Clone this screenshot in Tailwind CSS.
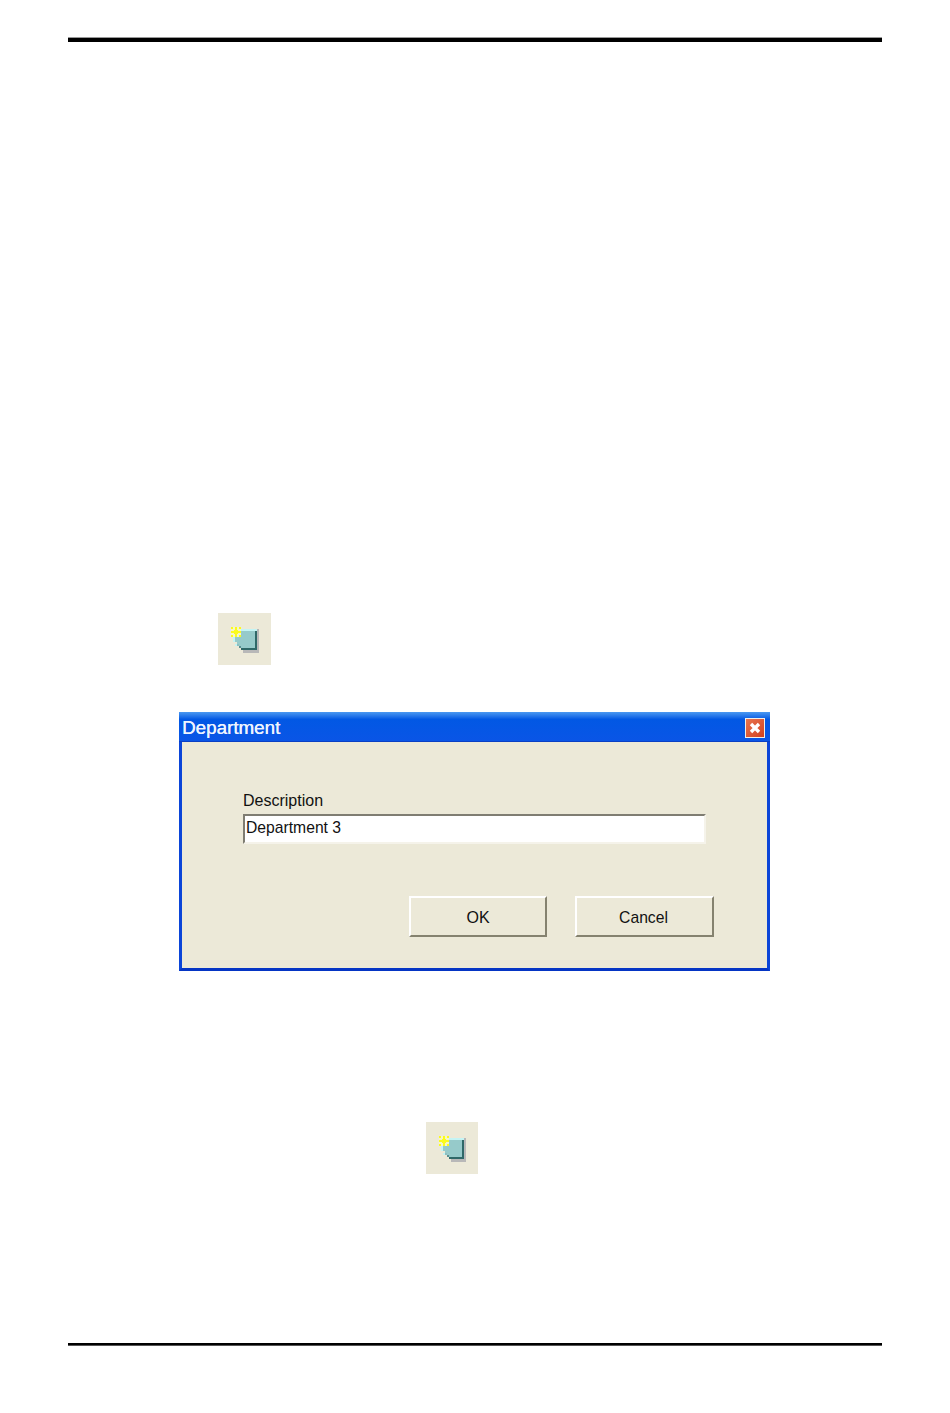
<!DOCTYPE html>
<html lang="en">
<head>
<meta charset="utf-8">
<title>Department</title>
<script src="https://cdn.jsdelivr.net/npm/@tailwindcss/browser@4"></script>
</head>
<body class="bg-white">
<main class="w-[950px] h-[1413px] px-[68px] pt-[37px] pb-[67px] flex flex-col font-['Liberation_Sans',sans-serif] overflow-hidden">
  <div class="h-[5px] shrink-0 bg-black border-t border-[#999999]"></div>

  <div class="ml-[150px] mt-[571px] w-[53px] h-[52px] shrink-0 bg-[#ece9d8] flex">
    <svg width="53" height="52" viewBox="0 0 53 52" shape-rendering="crispEdges" aria-hidden="true">
      <path d="M39 16H41V40H25V37H39Z" fill="#b8b8b8"/>
      <path d="M23 16H39V18H23ZM15 24H17V31H19V33H17V29H15Z" fill="#c4f4f4"/>
      <path d="M17 18H37V35H23V33H21V31H19V29H17Z" fill="#96caca"/>
      <path d="M37 18H39V37H23V35H37Z" fill="#2f6868"/>
      <path d="M19 31H21V33H19Z" fill="#8fbdbd"/>
      <path d="M21 33H23V35H21Z" fill="#5a9090"/>
      <path d="M13 14H23V24H13Z" fill="#f6f6c4"/>
      <path d="M16 17H20V21H16ZM17 14H19V17H17ZM17 21H19V24H17ZM13 18H16V20H13ZM20 18H23V20H20ZM13 14H15V16H13ZM21 14H23V16H21ZM13 22H15V24H13ZM21 22H23V24H21Z" fill="#fbfb1c"/>
    </svg>
  </div>

  <section class="ml-[111px] mt-[47px] w-[591px] h-[259px] shrink-0 flex flex-col bg-[#0a3cc8] border-x-[3px] border-b-[3px] border-x-[#0b45d8] border-b-[#0535c4]">
    <header class="-mx-[3px] h-[30px] shrink-0 flex items-center justify-between pl-[3px] pr-[5px] pt-[3px] bg-gradient-to-b from-[#4a98f0] from-0% via-[#0258e4] via-25% to-[#0a55e6] border-b border-[#0a3fc4]">
      <h1 class="mt-[1px] text-[18.8px] leading-none font-normal text-[#eef4ff] [text-shadow:0.3px_0_0_#eef4ff]">Department</h1>
      <span class="w-[20px] h-[20px] flex items-center justify-center bg-gradient-to-br from-[#e8744f] to-[#d2401f] border border-[#f2efe8]">
        <svg width="12" height="12" viewBox="0 0 12 12" aria-hidden="true"><path d="M2 2 10 10M10 2 2 10" stroke="#ffffff" stroke-width="3.4"/></svg>
      </span>
    </header>
    <div class="flex-1 bg-[#ece9d8] pl-[61px] pt-[50px] flex flex-col">
      <label class="text-[16px] leading-[18px] text-[#111111]">Description</label>
      <div class="mt-[4px] w-[463px] h-[30px] bg-white border-2 border-t-[#7f7d72] border-l-[#7f7d72] border-r-[#f5f3ea] border-b-[#f5f3ea] pl-[1px] pb-[2px] flex items-center text-[15.7px] text-[#111111]">Department 3</div>
      <div class="mt-[52px] ml-[166px] flex gap-[28px]">
        <button class="w-[138px] h-[41px] pt-[2px] bg-[#ece9d8] border-2 border-t-white border-l-white border-r-[#85826f] border-b-[#85826f] text-[16px] text-[#111111]">OK</button>
        <button class="w-[139px] h-[41px] pt-[2px] pr-[2px] bg-[#ece9d8] border-2 border-t-white border-l-white border-r-[#85826f] border-b-[#85826f] text-[15.7px] text-[#111111]">Cancel</button>
      </div>
    </div>
  </section>

  <div class="ml-[358px] mt-[151px] w-[52px] h-[52px] shrink-0 bg-[#ece9d8] flex">
    <svg width="52" height="52" viewBox="0 0 53 52" shape-rendering="crispEdges" aria-hidden="true">
      <path d="M39 16H41V40H25V37H39Z" fill="#b8b8b8"/>
      <path d="M23 16H39V18H23ZM15 24H17V31H19V33H17V29H15Z" fill="#c4f4f4"/>
      <path d="M17 18H37V35H23V33H21V31H19V29H17Z" fill="#96caca"/>
      <path d="M37 18H39V37H23V35H37Z" fill="#2f6868"/>
      <path d="M19 31H21V33H19Z" fill="#8fbdbd"/>
      <path d="M21 33H23V35H21Z" fill="#5a9090"/>
      <path d="M13 14H23V24H13Z" fill="#f6f6c4"/>
      <path d="M16 17H20V21H16ZM17 14H19V17H17ZM17 21H19V24H17ZM13 18H16V20H13ZM20 18H23V20H20ZM13 14H15V16H13ZM21 14H23V16H21ZM13 22H15V24H13ZM21 22H23V24H21Z" fill="#fbfb1c"/>
    </svg>
  </div>

  <div class="mt-auto h-[3px] shrink-0 bg-black border-b border-[#555555]"></div>
</main>
</body>
</html>
